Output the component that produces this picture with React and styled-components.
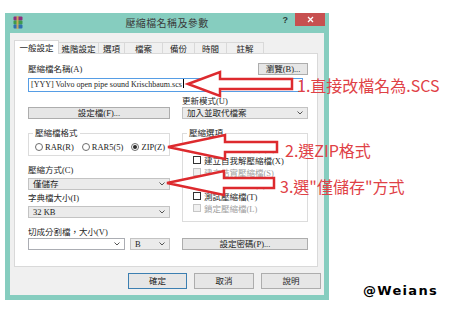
import React from 'react';
import styled, { createGlobalStyle } from 'styled-components';

const GlobalStyle = createGlobalStyle`
  html, body {
    margin: 0;
    padding: 0;
    background: #ffffff;
  }
  body {
    font-family: "Liberation Serif", "Noto Sans CJK TC", serif;
    color: #1e1e1e;
  }
`;

const Page = styled.div`
  position: relative;
  width: 452px;
  height: 314px;
  padding: 13px 0 0 5px;
  box-sizing: border-box;
  overflow: hidden;
  display: flex;
  align-items: flex-start;
`;

const Dialog = styled.div`
  width: 324px;
  height: 287px;
  background: #86cdbf;
  padding: 0 5px 5px;
  box-sizing: border-box;
  display: flex;
  flex-direction: column;
  flex-shrink: 0;
`;

const TitleBar = styled.div`
  height: 20px;
  display: grid;
  grid-template-columns: 1fr auto 1fr;
  align-items: start;
`;

const TitleText = styled.div`
  font-family: "Noto Sans CJK TC", sans-serif;
  font-size: 10px;
  line-height: 20px;
  color: #3b3b3b;
  letter-spacing: 0.4px;
`;

const TitleRight = styled.div`
  display: flex;
  justify-content: flex-end;
  align-items: flex-start;
  margin-right: -1px;
`;

const HelpMark = styled.span`
  font-family: "Liberation Sans", sans-serif;
  font-weight: bold;
  font-size: 9px;
  line-height: 15px;
  color: #2b3b38;
  margin-right: 7px;
`;

const CloseButton = styled.div`
  width: 30px;
  height: 13px;
  background: #c75050;
  display: flex;
  align-items: center;
  justify-content: center;
`;

const Client = styled.div`
  flex: 1;
  background: #f0f0f0;
  padding: 7px 3px 6px 4px;
  display: flex;
  flex-direction: column;
`;

const TabRow = styled.div`
  display: flex;
  align-items: flex-end;
  height: 14px;
  margin-bottom: -1px;
  position: relative;
  z-index: 1;
`;

const Tab = styled.div`
  width: ${p => p.$w}px;
  height: ${p => (p.$active ? 14 : 12)}px;
  box-sizing: border-box;
  border: 1px solid #d9d9d9;
  border-bottom: ${p => (p.$active ? 'none' : '1px solid #d9d9d9')};
  margin-left: -1px;
  background: ${p => (p.$active ? '#ffffff' : '#f0f0f0')};
  font-family: "Noto Sans CJK TC", sans-serif;
  font-size: 8.5px;
  line-height: ${p => (p.$active ? 12 : 10)}px;
  text-align: center;
  color: #222;
  &:first-child {
    margin-left: 0;
  }
`;

const Panel = styled.div`
  background: #ffffff;
  border: 1px solid #d9d9d9;
  margin-right: 3px;
  padding: 9px 9px 16px 13px;
  display: flex;
  flex-direction: column;
`;

const Label = styled.div`
  font-size: 8.5px;
  line-height: 12px;
  height: 12px;
  margin-top: ${p => p.$mt || 0}px;
  color: ${p => (p.$disabled ? '#a0a0a0' : '#1e1e1e')};
  white-space: nowrap;
`;

const HeaderRow = styled.div`
  display: flex;
  justify-content: space-between;
  align-items: center;
  height: 12px;
`;

const Button = styled.div`
  height: ${p => p.$h || 12}px;
  width: ${p => (p.$w ? `${p.$w}px` : 'auto')};
  padding: ${p => (p.$w ? '0' : '0 6px')};
  box-sizing: border-box;
  border: 1px solid ${p => (p.$default ? '#3c7fb1' : '#adadad')};
  background: #e6e6e6;
  font-size: 8.5px;
  line-height: ${p => (p.$h || 12) - 2}px;
  text-align: center;
  color: #222;
  white-space: nowrap;
`;

const TextInput = styled.div`
  margin-top: 3px;
  margin-right: 5px;
  height: 14px;
  box-sizing: border-box;
  border: 1px solid #569de5;
  background: #fff;
  font-size: 8px;
  line-height: 12px;
  padding-left: 2px;
  white-space: nowrap;
  overflow: hidden;
`;

const Caret = styled.span`
  display: inline-block;
  width: 1px;
  height: 9px;
  background: #000;
  vertical-align: -1px;
  margin-left: 1px;
`;

const Columns = styled.div`
  display: grid;
  grid-template-columns: 142px 126px;
  column-gap: 12px;
  margin-top: 3px;
`;

const Stack = styled.div`
  display: flex;
  flex-direction: column;
  min-width: 0;
`;

const SelectBox = styled.div`
  height: 12px;
  margin-top: ${p => p.$mt || 0}px;
  width: ${p => (p.$w ? `${p.$w}px` : 'auto')};
  box-sizing: border-box;
  border: 1px solid ${p => (p.$editable ? '#abadb3' : '#c3c3c3')};
  background: ${p => (p.$editable ? '#ffffff' : '#ebebeb')};
  display: flex;
  align-items: center;
  justify-content: space-between;
  padding: 0 4px 0 4px;
  font-size: 8.5px;
  line-height: 10px;
  white-space: nowrap;
`;

const Group = styled.fieldset`
  margin: 8px 0 0;
  padding: 3px 0 ${p => p.$pb}px 0;
  border: 1px solid #dcdcdc;
  min-width: 0;
`;

const Legend = styled.legend`
  padding: 0 2px;
  margin-left: 4px;
  font-size: 8.5px;
  line-height: 12px;
`;

const GroupBody = styled.div`
  padding-left: ${p => p.$pl}px;
`;

const RadioRow = styled.div`
  display: flex;
  align-items: center;
  gap: 8px;
  height: 10px;
`;

const RadioItem = styled.div`
  display: flex;
  align-items: center;
  gap: 2px;
  font-size: 8.5px;
`;

const RadioCircle = styled.span`
  width: 8px;
  height: 8px;
  box-sizing: border-box;
  border-radius: 50%;
  border: 1px solid #6e6e6e;
  background: #fff;
  display: flex;
  align-items: center;
  justify-content: center;
  &::after {
    content: '';
    width: 4px;
    height: 4px;
    border-radius: 50%;
    background: ${p => (p.$on ? '#2a2a2a' : 'transparent')};
  }
`;

const CheckRow = styled.div`
  display: flex;
  align-items: center;
  gap: 3px;
  height: 12px;
  font-size: 8.5px;
  color: ${p => (p.$disabled ? '#a0a0a0' : '#1e1e1e')};
  white-space: nowrap;
`;

const CheckBox = styled.span`
  width: 8px;
  height: 8px;
  box-sizing: border-box;
  border: 1px solid ${p => (p.$disabled ? '#c6c6c6' : '#333333')};
  background: ${p => (p.$disabled ? '#f0f0f0' : '#ffffff')};
  flex-shrink: 0;
`;

const SplitRow = styled.div`
  display: flex;
  gap: 5px;
`;

const FooterRow = styled.div`
  display: flex;
  justify-content: flex-end;
  gap: 7px;
  margin-top: 6px;
`;

const Side = styled.div`
  align-self: flex-end;
  margin: 0 0 17px 34px;
`;

const Watermark = styled.div`
  font-family: "DejaVu Sans", sans-serif;
  font-weight: bold;
  font-size: 13px;
  line-height: 12px;
  letter-spacing: 1.3px;
  color: #000;
  text-shadow: 1px 0 0 #fff, -1px 0 0 #fff;
`;

const ArrowLayer = styled.svg`
  position: absolute;
  left: 0;
  top: 0;
  pointer-events: none;
`;

const Note = styled.span`
  position: absolute;
  left: ${p => p.$x}px;
  top: ${p => p.$y}px;
  font-family: "Noto Sans CJK TC", sans-serif;
  font-size: 16px;
  line-height: 18px;
  color: #df4146;
  white-space: nowrap;
  pointer-events: none;
`;

const Chevron = () => (
  <svg width="6" height="4" viewBox="0 0 6 4">
    <polyline points="0.5,0.5 3,3 5.5,0.5" fill="none" stroke="#555" strokeWidth="1" />
  </svg>
);

const Select = ({ children, ...rest }) => (
  <SelectBox {...rest}>
    <span>{children}</span>
    <Chevron />
  </SelectBox>
);

const RarIcon = () => (
  <svg width="10" height="13" viewBox="0 0 10 13" style={{ marginLeft: 3, marginTop: 3 }}>
    <rect x="0.5" y="0.5" width="9" height="4" rx="1" fill="#8a2f7d" />
    <rect x="0.5" y="4.5" width="9" height="4" rx="1" fill="#3f9a4e" />
    <rect x="0.5" y="8.5" width="9" height="4" rx="1" fill="#2f6fb0" />
    <rect x="3.5" y="0" width="2" height="13" fill="#d8b25a" opacity="0.85" />
  </svg>
);

// tip x, centre y, length, head length
const arrowPoints = ({ x, cy, len, head }) => {
  const hx = x + head;
  const ex = x + len;
  return [
    [x, cy], [hx, cy - 12], [hx, cy - 5], [ex, cy - 5],
    [ex, cy + 5], [hx, cy + 5], [hx, cy + 12],
  ].map(p => p.join(',')).join(' ');
};

const tabs = [
  { label: '一般設定', w: 45, active: true },
  { label: '進階設定', w: 41 },
  { label: '選項', w: 27 },
  { label: '檔案', w: 39 },
  { label: '備份', w: 33 },
  { label: '時間', w: 33 },
  { label: '註解', w: 38 },
];

const options = [
  { label: '壓縮後刪除檔案(D)' },
  { label: '建立自我解壓縮檔(X)' },
  { label: '建立結實壓縮檔(S)', disabled: true },
  { label: '加入復原記錄(E)' },
  { label: '測試壓縮檔(T)' },
  { label: '鎖定壓縮檔(L)', disabled: true },
];

const callouts = [
  { id: 'name', x: 188, cy: 84, len: 104, head: 32, tx: 297, ty: 76, text: '1.直接改檔名為.SCS' },
  { id: 'zip', x: 168, cy: 147, len: 109, head: 57, tx: 285, ty: 141, text: '2.選ZIP格式' },
  { id: 'store', x: 167, cy: 183, len: 107, head: 57, tx: 280, ty: 177, text: '3.選"僅儲存"方式' },
];

const App = () => {
  return (
    <Page>
      <GlobalStyle />
      <Dialog>
        <TitleBar>
          <div><RarIcon /></div>
          <TitleText>壓縮檔名稱及參數</TitleText>
          <TitleRight>
            <HelpMark>?</HelpMark>
            <CloseButton>
              <svg width="7" height="7" viewBox="0 0 7 7">
                <path d="M1 1 L6 6 M6 1 L1 6" stroke="#fff" strokeWidth="1.3" />
              </svg>
            </CloseButton>
          </TitleRight>
        </TitleBar>
        <Client>
          <TabRow>
            {tabs.map(t => (
              <Tab key={t.label} $w={t.w} $active={t.active}>{t.label}</Tab>
            ))}
          </TabRow>
          <Panel>
            <HeaderRow>
              <Label>壓縮檔名稱(A)</Label>
              <Button $w={50}>瀏覽(B)...</Button>
            </HeaderRow>
            <TextInput>
              [YYY] Volvo open pipe sound Krischbaum.scs<Caret />
            </TextInput>
            <Columns>
              <div />
              <Label>更新模式(U)</Label>

              <Button>設定檔(F)...</Button>
              <Select>加入並取代檔案</Select>

              <Stack>
                <Group $pb={3}>
                  <Legend>壓縮檔格式</Legend>
                  <GroupBody $pl={6}>
                    <RadioRow>
                      <RadioItem><RadioCircle />RAR(R)</RadioItem>
                      <RadioItem><RadioCircle />RAR5(5)</RadioItem>
                      <RadioItem><RadioCircle $on />ZIP(Z)</RadioItem>
                    </RadioRow>
                  </GroupBody>
                </Group>
                <Label $mt={8}>壓縮方式(C)</Label>
                <Select $mt={2}>僅儲存</Select>
                <Label $mt={2}>字典檔大小(I)</Label>
                <Select $mt={2}>32 KB</Select>
                <Label $mt={8}>切成分割檔，大小(V)</Label>
              </Stack>
              <Stack>
                <Group $pb={7}>
                  <Legend>壓縮選項</Legend>
                  <GroupBody $pl={10}>
                    {options.map(o => (
                      <CheckRow key={o.label} $disabled={o.disabled}>
                        <CheckBox $disabled={o.disabled} />
                        {o.label}
                      </CheckRow>
                    ))}
                  </GroupBody>
                </Group>
              </Stack>

              <SplitRow>
                <Select $w={97} $editable> </Select>
                <Select $w={40}>B</Select>
              </SplitRow>
              <Button>設定密碼(P)...</Button>
            </Columns>
          </Panel>
          <FooterRow>
            <Button $w={59} $h={16} $default>確定</Button>
            <Button $w={60} $h={16}>取消</Button>
            <Button $w={60} $h={16}>說明</Button>
          </FooterRow>
        </Client>
      </Dialog>
      <Side>
        <Watermark>@Weians</Watermark>
      </Side>
      <ArrowLayer width="452" height="314" viewBox="0 0 452 314">
        {callouts.map(c => (
          <polygon
            key={c.id}
            points={arrowPoints(c)}
            fill="#ffffff"
            stroke="#dd2a2e"
            strokeWidth="2.5"
          />
        ))}
      </ArrowLayer>
      {callouts.map(c => (
        <Note key={c.id} $x={c.tx} $y={c.ty}>{c.text}</Note>
      ))}
    </Page>
  );
};

export default App;
